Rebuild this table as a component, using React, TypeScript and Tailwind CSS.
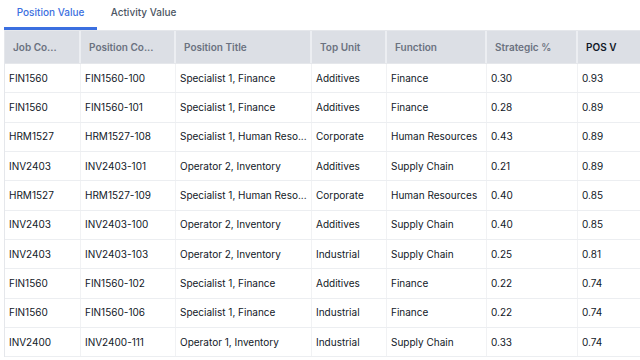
import React from 'react';

type Row = [string, string, string, string, string, string, string];

const rows: Row[] = [
  ['FIN1560', 'FIN1560-100', 'Specialist 1, Finance', 'Additives', 'Finance', '0.30', '0.93'],
  ['FIN1560', 'FIN1560-101', 'Specialist 1, Finance', 'Additives', 'Finance', '0.28', '0.89'],
  ['HRM1527', 'HRM1527-108', 'Specialist 1, Human Reso...', 'Corporate', 'Human Resources', '0.43', '0.89'],
  ['INV2403', 'INV2403-101', 'Operator 2, Inventory', 'Additives', 'Supply Chain', '0.21', '0.89'],
  ['HRM1527', 'HRM1527-109', 'Specialist 1, Human Reso...', 'Corporate', 'Human Resources', '0.40', '0.85'],
  ['INV2403', 'INV2403-100', 'Operator 2, Inventory', 'Additives', 'Supply Chain', '0.40', '0.85'],
  ['INV2403', 'INV2403-103', 'Operator 2, Inventory', 'Industrial', 'Supply Chain', '0.25', '0.81'],
  ['FIN1560', 'FIN1560-102', 'Specialist 1, Finance', 'Additives', 'Finance', '0.22', '0.74'],
  ['FIN1560', 'FIN1560-106', 'Specialist 1, Finance', 'Industrial', 'Finance', '0.22', '0.74'],
  ['INV2400', 'INV2400-111', 'Operator 1, Inventory', 'Industrial', 'Supply Chain', '0.33', '0.74'],
];

const headers = ['Job Co...', 'Position Co...', 'Position Title', 'Top Unit', 'Function', 'Strategic %', 'POS V'];

const cols = 'grid grid-cols-[76px_95px_136px_75px_100px_91px_110px]';

const App: React.FC = () => {
  return (
    <div className="w-[640px] h-[360px] overflow-hidden bg-white font-['Inter',sans-serif] text-[10px]">
      {/* tabs */}
      <div className="flex h-[30px] pl-[4px]">
        <div className="w-[93px] flex justify-center pt-[5px] font-medium text-[#3b6fe0] border-b-[3px] border-[#3b6fe0]">
          Position Value
        </div>
        <div className="w-[93px] flex justify-center pt-[5px] font-medium text-[#4b5563]">
          Activity Value
        </div>
      </div>
      <div className="ml-[4px] w-[700px] border-l border-t border-[#e5e7eb]">
        <div className={`${cols} h-[33px] bg-[#dcdfe5] border-b border-[#e5e7eb]`}>
          {headers.map((h, i) => (
            <div
              key={h}
              className={`flex items-center pl-[8px] font-semibold border-r-2 border-[#eceef2] ${
                i === 6 ? 'text-[#111827]' : 'text-[#6b7280]'
              }`}
            >
              {h}
            </div>
          ))}
        </div>
        {rows.map((r, ri) => (
          <div key={ri} className={`${cols} h-[29.33px] border-b border-[#eceef1]`}>
            {r.map((c, ci) => (
              <div key={ci} className="flex items-center pl-[4px] text-[#111827] border-r border-[#f1f2f4] whitespace-nowrap">
                {c}
              </div>
            ))}
          </div>
        ))}
      </div>
    </div>
  );
};

export default App;
